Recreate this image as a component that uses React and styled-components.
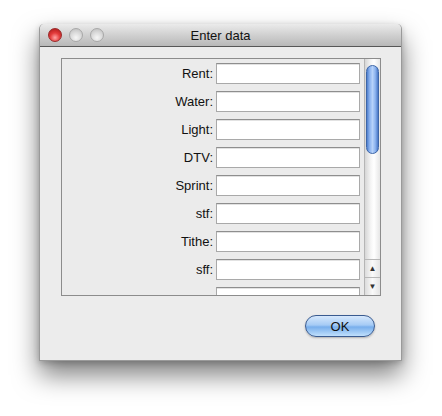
import styled, { createGlobalStyle } from 'styled-components';

const GlobalStyle = createGlobalStyle`
  html, body {
    margin: 0;
    padding: 0;
    background: #ffffff;
  }
  body {
    font-family: 'Liberation Sans', Arial, sans-serif;
    width: 442px;
    height: 416px;
    overflow: hidden;
  }
`;

const fields = ['Rent', 'Water', 'Light', 'DTV', 'Sprint', 'stf', 'Tithe', 'sff', ''];

const Page = styled.div`
  width: 442px;
  height: 416px;
  padding: 24px 0 0 39px;
  box-sizing: border-box;
`;

const Window = styled.div`
  width: 363px;
  height: 337px;
  display: flex;
  flex-direction: column;
  background: #ececec;
  border: 1px solid #9a9a9a;
  border-top: none;
  box-sizing: border-box;
  border-radius: 5px 5px 0 0;
  box-shadow: 0 14px 26px rgba(0, 0, 0, 0.5), 0 2px 6px rgba(0, 0, 0, 0.2);
`;

const TitleBar = styled.div`
  height: 23px;
  flex: none;
  display: flex;
  align-items: center;
  position: relative;
  box-sizing: border-box;
  border-radius: 5px 5px 0 0;
  border-bottom: 1px solid #575757;
  background: linear-gradient(#ebebeb, #d0d0d0 50%, #b8b8b8);
  padding-left: 8px;
  gap: 7px;
`;

const Light = styled.span`
  width: 14px;
  height: 14px;
  border-radius: 50%;
  box-sizing: border-box;
  border: 1px solid ${(p) => (p.$red ? '#9a2a2a' : '#a8a8a8')};
  background: ${(p) =>
    p.$red
      ? 'radial-gradient(circle at 50% 72%, #ffa4a4 0%, #e43b3b 45%, #a51515 100%)'
      : 'radial-gradient(circle at 50% 72%, #f6f6f6 0%, #dadada 50%, #bababa 100%)'};
`;

const Title = styled.div`
  position: absolute;
  left: 0;
  right: 0;
  text-align: center;
  font-size: 13px;
  color: #111;
  pointer-events: none;
`;

const Body = styled.div`
  flex: 1;
  display: flex;
  flex-direction: column;
  padding: 11px 21px 0 21px;
`;

const ScrollPane = styled.div`
  width: 320px;
  height: 238px;
  box-sizing: border-box;
  border: 1px solid #8c8c8c;
  background: #ebebeb;
  display: flex;
`;

const Viewport = styled.div`
  flex: 1;
  overflow: hidden;
  display: flex;
  flex-direction: column;
  gap: 7px;
  padding: 4px 0 0 0;
`;

const Row = styled.div`
  display: flex;
  align-items: center;
  height: 21px;
  flex: none;
`;

const Label = styled.label`
  width: 151px;
  text-align: right;
  font-size: 13px;
  color: #111;
  padding-right: 3px;
`;

const Field = styled.div`
  width: 144px;
  height: 21px;
  box-sizing: border-box;
  background: #fff;
  border: 1px solid #a9a9a9;
  border-top-color: #8e8e8e;
  box-shadow: inset 0 1px 0 #e2e2e2;
`;

const ScrollBar = styled.div`
  width: 16px;
  margin-left: 4px;
  display: flex;
  flex-direction: column;
  box-sizing: border-box;
  border-left: 1px solid #b5b5b5;
  background: linear-gradient(90deg, #d6d6d6, #f6f6f6 40%, #ffffff 60%, #e6e6e6);
`;

const Track = styled.div`
  flex: 1;
  padding: 6px 1px 0 1px;
`;

const Thumb = styled.div`
  width: 13px;
  height: 89px;
  box-sizing: border-box;
  border-radius: 7px;
  border: 1px solid #3d66a8;
  background: linear-gradient(90deg, #4f7fce 0%, #8db4ef 25%, #b6d2fa 50%, #8db4ef 75%, #4a78c6 100%);
`;

const Arrow = styled.div`
  height: 17px;
  display: flex;
  align-items: center;
  justify-content: center;
  border-top: 1px solid #b8b8b8;
  font-size: 8px;
  color: #333;
  background: linear-gradient(90deg, #dcdcdc, #fafafa 50%, #e4e4e4);
`;

const Footer = styled.div`
  display: flex;
  justify-content: flex-end;
  padding: 19px 5px 0 0;
`;

const OkButton = styled.button`
  width: 70px;
  height: 22px;
  border-radius: 11px;
  border: 1px solid #3a5b90;
  font-family: 'Liberation Sans', Arial, sans-serif;
  font-size: 13px;
  color: #111;
  padding: 0;
  background: linear-gradient(#d6e8fc 0%, #a6cbf5 45%, #78aeec 55%, #c0e0fc 100%);
  box-shadow: 0 1px 2px rgba(0, 0, 0, 0.25);
`;

const App = () => {
  return (
    <>
      <GlobalStyle />
      <Page>
        <Window>
          <TitleBar>
            <Light $red />
            <Light />
            <Light />
            <Title>Enter data</Title>
          </TitleBar>
          <Body>
            <ScrollPane>
              <Viewport>
                {fields.map((name, i) => (
                  <Row key={i}>
                    <Label>{name ? name + ':' : ''}</Label>
                    <Field />
                  </Row>
                ))}
              </Viewport>
              <ScrollBar>
                <Track>
                  <Thumb />
                </Track>
                <Arrow>▲</Arrow>
                <Arrow>▼</Arrow>
              </ScrollBar>
            </ScrollPane>
            <Footer>
              <OkButton>OK</OkButton>
            </Footer>
          </Body>
        </Window>
      </Page>
    </>
  );
};

export default App;
